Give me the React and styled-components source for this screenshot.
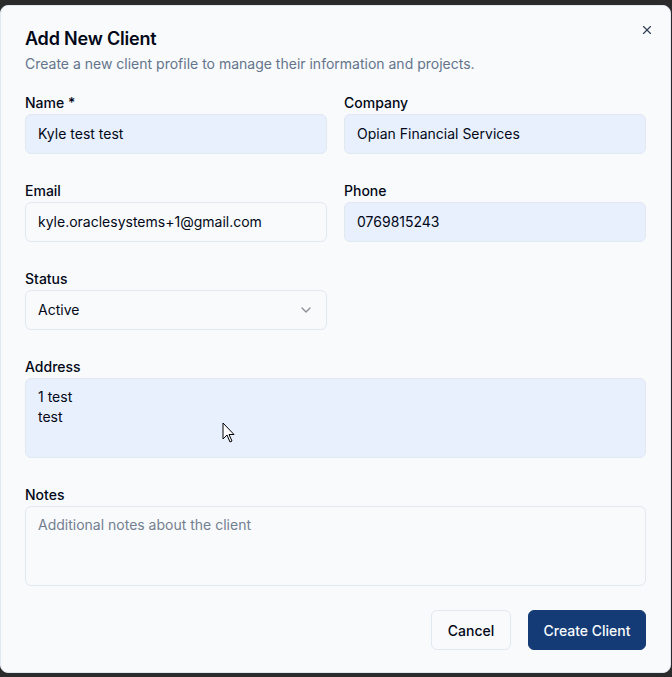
import React from 'react';
import styled, { createGlobalStyle } from 'styled-components';

const GlobalStyle = createGlobalStyle`
  html, body {
    margin: 0;
    padding: 0;
    background: #2b2b2b;
    font-family: Inter, "Noto Sans", sans-serif;
  }
`;

const Dialog = styled.div`
  position: relative;
  box-sizing: border-box;
  width: 671px;
  height: 668px;
  margin-top: 5px;
  background: #f8fafc;
  border: 1px solid #e2e8f0;
  border-radius: 8px;
  padding: 23px 24px 24px;
  display: flex;
  flex-direction: column;
`;

const Header = styled.div`
  display: flex;
  flex-direction: column;
  gap: 5px;
  margin-bottom: 22px;
`;

const Title = styled.h2`
  margin: 0;
  font-size: 18px;
  line-height: 20px;
  font-weight: 600;
  color: #020817;
  letter-spacing: -0.2px;
`;

const Subtitle = styled.p`
  margin: 0;
  font-size: 14px;
  line-height: 20px;
  color: #64748b;
`;

const CloseButton = styled.button`
  position: absolute;
  top: 16px;
  right: 15px;
  width: 16px;
  height: 16px;
  padding: 0;
  border: none;
  background: none;
  color: #334155;
  display: flex;
  align-items: center;
  justify-content: center;
`;

const Grid = styled.div`
  display: grid;
  grid-template-columns: 1fr 1fr;
  column-gap: 17px;
  row-gap: 30px;
`;

const Field = styled.div`
  display: flex;
  flex-direction: column;
  gap: 4px;
  grid-column: ${p => (p.$full ? '1 / -1' : 'auto')};
`;

const Label = styled.label`
  font-size: 14px;
  line-height: 14px;
  font-weight: 500;
  color: #020817;
`;

const Input = styled.div`
  box-sizing: border-box;
  height: ${p => (p.$tall ? '80px' : '40px')};
  padding: ${p => (p.$tall ? '8px 12px' : '0 12px')};
  display: flex;
  align-items: ${p => (p.$tall ? 'flex-start' : 'center')};
  justify-content: space-between;
  background: ${p => (p.$filled ? '#e8f0fe' : '#f8fafc')};
  border: 1px solid #e2e8f0;
  border-radius: 6px;
  font-size: 14px;
  line-height: 20px;
  color: ${p => (p.$placeholder ? '#737f8f' : '#020817')};
  white-space: pre-line;
`;

const Footer = styled.div`
  display: flex;
  justify-content: flex-end;
  gap: 17px;
  margin-top: 24px;
`;

const Button = styled.button`
  box-sizing: border-box;
  height: 40px;
  width: ${p => (p.$primary ? '118px' : '80px')};
  padding: 0;
  border-radius: 6px;
  font-family: inherit;
  font-size: 14px;
  font-weight: 500;
  border: 1px solid ${p => (p.$primary ? '#143b76' : '#e2e8f0')};
  background: ${p => (p.$primary ? '#143b76' : '#f8fafc')};
  color: ${p => (p.$primary ? '#f8fafc' : '#020817')};
`;

const Cursor = styled.svg`
  position: absolute;
  left: 221px;
  top: 416px;
`;

const Chevron = () => (
  <svg width="16" height="16" viewBox="0 0 24 24" fill="none" stroke="#8a8f98" strokeWidth="2" strokeLinecap="round" strokeLinejoin="round">
    <path d="m6 9 6 6 6-6" />
  </svg>
);

export default function App() {
  return (
    <>
      <GlobalStyle />
      <Dialog>
        <CloseButton aria-label="Close">
          <svg width="14" height="14" viewBox="0 0 24 24" fill="none" stroke="currentColor" strokeWidth="2" strokeLinecap="round" strokeLinejoin="round">
            <path d="M18 6 6 18" />
            <path d="m6 6 12 12" />
          </svg>
        </CloseButton>
        <Header>
          <Title>Add New Client</Title>
          <Subtitle>Create a new client profile to manage their information and projects.</Subtitle>
        </Header>
        <Grid>
          <Field>
            <Label>Name *</Label>
            <Input $filled>Kyle test test</Input>
          </Field>
          <Field>
            <Label>Company</Label>
            <Input $filled>Opian Financial Services</Input>
          </Field>
          <Field>
            <Label>Email</Label>
            <Input>kyle.oraclesystems+1@gmail.com</Input>
          </Field>
          <Field>
            <Label>Phone</Label>
            <Input $filled>0769815243</Input>
          </Field>
          <Field>
            <Label>Status</Label>
            <Input>
              Active
              <Chevron />
            </Input>
          </Field>
          <div />
          <Field $full>
            <Label>Address</Label>
            <Input $filled $tall>{'1 test\ntest'}</Input>
          </Field>
          <Field $full>
            <Label>Notes</Label>
            <Input $tall $placeholder>Additional notes about the client</Input>
          </Field>
        </Grid>
        <Footer>
          <Button>Cancel</Button>
          <Button $primary>Create Client</Button>
        </Footer>
        <Cursor width="14" height="22" viewBox="0 0 14 22">
          <path d="M1 1 L1 17 L5 13 L8 20 L10 19 L7 12.5 L12 12.5 Z" fill="#fff" stroke="#000" strokeWidth="1" strokeLinejoin="round" />
        </Cursor>
      </Dialog>
    </>
  );
}
